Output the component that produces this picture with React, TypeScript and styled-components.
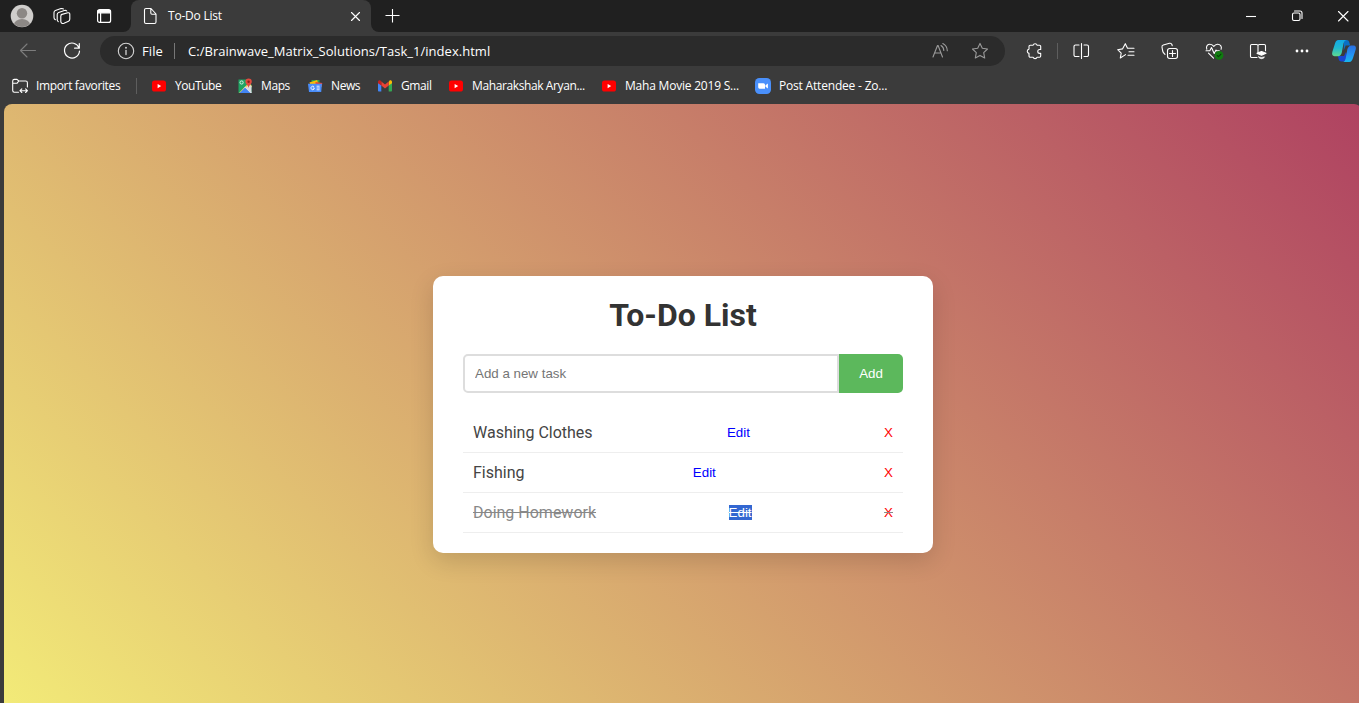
import React from "react";
import styled, { createGlobalStyle } from "styled-components";

const GlobalStyle = createGlobalStyle`
  *, *::before, *::after { box-sizing: border-box; }
  html, body { margin: 0; padding: 0; overflow: hidden; background: #3b3b3b; }
`;

const Browser = styled.div`
  width: 1359px;
  height: 703px;
  overflow: hidden;
  display: flex;
  flex-direction: column;
  background: #3b3b3b;
  color: #fff;
  font-family: "Open Sans", "Noto Sans", sans-serif;
`;

/* ---------- title bar ---------- */
const TitleBar = styled.div`
  flex: none;
  height: 32px;
  display: flex;
  align-items: stretch;
  background: #202020;
`;

const Cell = styled.div<{ $w: number }>`
  flex: none;
  width: ${(p) => p.$w}px;
  display: flex;
  align-items: center;
  justify-content: center;
`;

const TabLead = styled.div`
  flex: none;
  width: 131px;
  display: flex;
  background: #202020;
  border-bottom-right-radius: 8px;
`;

const TabBase = styled.div`
  flex: none;
  display: flex;
  background: #3b3b3b;
`;

const Tab = styled.div`
  width: 240px;
  display: flex;
  align-items: center;
  padding: 0 6px 0 9px;
  background: #3b3b3b;
`;

const TabSurface = styled.div`
  flex: none;
  display: flex;
  background: #202020;
  ${Tab} { border-radius: 8px 8px 0 0; }
`;

const TabTitle = styled.span`
  flex: 1;
  padding-left: 8px;
  font-size: 12px;
  line-height: 16px;
  letter-spacing: -0.22px;
  white-space: nowrap;
`;

const TabTail = styled.div`
  flex: 1;
  display: flex;
  justify-content: space-between;
  background: #202020;
  border-bottom-left-radius: 8px;
`;

const TailBase = styled.div`
  flex: 1;
  display: flex;
  background: #3b3b3b;
`;

const Group = styled.div`
  display: flex;
`;

/* ---------- toolbar ---------- */
const Toolbar = styled.div`
  flex: none;
  height: 38px;
  display: flex;
  align-items: center;
  padding-left: 6px;
`;

const AddressBar = styled.div`
  flex: none;
  width: 905px;
  height: 30px;
  margin: 0 7px 0 6px;
  padding: 0 5px 0 16px;
  border-radius: 15px;
  background: #2b2b2b;
  display: flex;
  align-items: center;
  font-size: 13px;
  line-height: 18px;
  white-space: nowrap;
`;

const Scheme = styled.span`
  width: 32px;
  padding-left: 6px;
  letter-spacing: 0.1px;
`;

const Url = styled.span`
  flex: 1;
  padding-left: 7px;
  letter-spacing: 0.03px;
`;

const Divider = styled.i<{ $h: number; $c: string }>`
  flex: none;
  width: 1px;
  height: ${(p) => p.$h}px;
  background: ${(p) => p.$c};
`;

/* ---------- favorites bar ---------- */
const FavoritesBar = styled.div`
  flex: none;
  height: 34px;
  display: flex;
  align-items: center;
  padding: 0 0 2px 12px;
`;

const Favorite = styled.div<{ $w: number; $ls: number }>`
  flex: none;
  width: ${(p) => p.$w}px;
  display: flex;
  align-items: center;
  gap: 8px;
  font-size: 12px;
  line-height: 16px;
  letter-spacing: ${(p) => p.$ls}px;
  white-space: nowrap;
  svg { flex: none; }
`;

const FavDivider = styled(Divider)`
  margin-right: 14px;
`;

/* ---------- page ---------- */
const Page = styled.main`
  flex: none;
  width: 1358px;
  height: 621px;
  margin-left: 4px;
  border-radius: 8px 8px 0 0;
  background: linear-gradient(45deg, #f3ec78, #af4261);
  display: flex;
  align-items: center;
  justify-content: center;
  font-family: Roboto, sans-serif;
`;

const Card = styled.section`
  width: 500px;
  height: 277px;
  padding: 20px 30px;
  border-radius: 10px;
  background: #fff;
  box-shadow: 0 8px 24px rgba(0, 0, 0, 0.14);
`;

const Heading = styled.h1`
  margin: 0 0 20px;
  font-size: 32px;
  line-height: 38px;
  font-weight: 700;
  text-align: center;
  color: #333;
`;

const Form = styled.div`
  display: flex;
  height: 39px;
  margin-bottom: 20px;
`;

const TaskInput = styled.input`
  flex: 1;
  min-width: 0;
  padding: 10px;
  border: 2px solid #ddd;
  border-radius: 5px 0 0 5px;
  background: #fff;
  outline: none;
  font: 13.333px "Liberation Sans", Arial, sans-serif;
  &::placeholder { color: #757575; opacity: 1; }
`;

const AddButton = styled.button`
  width: 64px;
  padding: 0;
  border: none;
  border-radius: 0 5px 5px 0;
  background: #5cb85c;
  color: #fff;
  font: 13.333px "Liberation Sans", Arial, sans-serif;
`;

const TaskList = styled.ul`
  margin: 0;
  padding: 0;
  list-style: none;
`;

const Task = styled.li<{ $done?: boolean }>`
  height: 40px;
  padding: 10px;
  border-bottom: 1px solid #eee;
  display: flex;
  justify-content: space-between;
  align-items: center;
  font-size: 16px;
  line-height: 19px;
  color: ${(p) => (p.$done ? "#888" : "#444")};
  text-decoration: ${(p) => (p.$done ? "line-through" : "none")};
`;

const Action = styled.span<{ $color: string; $selected?: boolean }>`
  font: 13.333px/15px "Liberation Sans", Arial, sans-serif;
  color: ${(p) => (p.$selected ? "#fff" : p.$color)};
  background: ${(p) => (p.$selected ? "#3367d1" : "transparent")};
`;

const SelectedText = styled.span`
  text-decoration: line-through #fff;
`;

/* ---------- icons ---------- */
type IconProps = { size?: number; c?: string; children: React.ReactNode; w?: number };
const Icon = ({ size = 20, c = "#fff", w = 1.1, children }: IconProps) => (
  <svg width={size} height={size} viewBox={`0 0 ${size} ${size}`} fill="none" stroke={c} strokeWidth={w} strokeLinecap="round" strokeLinejoin="round">
    {children}
  </svg>
);

const Avatar = () => (
  <svg width="24" height="24" viewBox="0 0 24 24">
    <defs><clipPath id="av"><circle cx="12" cy="12" r="11" /></clipPath></defs>
    <circle cx="12" cy="12" r="11.3" fill="#d0cecc" />
    <g clipPath="url(#av)" fill="#8c8885">
      <circle cx="12" cy="9.3" r="5.2" />
      <ellipse cx="12" cy="20.4" rx="8" ry="5.3" />
    </g>
  </svg>
);

const Workspaces = () => (
  <Icon>
    <path d="M9.2 8.6 15.8 6.8Q17.8 6.4 17.8 8.2V13Q17.8 14.6 16.5 15.3L12 17.3Q9.2 18 8.8 15.6V10Q8.8 8.8 10 8.4Z" />
    <path d="M6.3 15.6Q5.2 14.8 5.2 13.4V8.6Q5.2 7 6.7 6.5L12.3 4.5Q14 4.1 14.8 5" />
    <path d="M3.4 13.7Q2 13 2 11.4V6.4Q2 5 3.4 4.5L9 2.6Q10.6 2.2 11.4 3" />
  </Icon>
);

const TabActions = () => (
  <Icon w={1.2}>
    <rect x="3.6" y="3.6" width="13" height="12.8" rx="2" />
    <path d="M4 4.6h12.2v2.2H4z" fill="#fff" />
    <path d="M6.6 7v9" />
  </Icon>
);

const Doc = () => (
  <Icon>
    <path d="M6 2.5h5L16 8v8a1.5 1.5 0 0 1-1.5 1.5H6A1.5 1.5 0 0 1 4.5 16V4A1.5 1.5 0 0 1 6 2.5ZM10.8 2.8V7a1.2 1.2 0 0 0 1.2 1.2h3.8" />
  </Icon>
);

const Star = "M10 2.4l2.3 4.9 5.2.7-3.8 3.7 1 5.3L10 14.4 5.3 17l1-5.3L2.5 8l5.2-.7Z";

const YouTube = () => (
  <svg width="16" height="16" viewBox="0 0 16 16">
    <rect x="1" y="2.5" width="14" height="11" rx="2.6" fill="#f00" />
    <path d="M6.6 5.9v4.4l3.6-2.2z" fill="#fff" />
  </svg>
);

const Maps = () => (
  <svg width="16" height="16" viewBox="0 0 16 16">
    <path d="M1.5 1.5h9L14.5 7v8h-13z" fill="#1fa463" />
    <path d="M2 14.8 12 4.8l2.6 3V9L8.4 15z" fill="#ffd04b" />
    <path d="M8.2 8.6 14.5 14v1h-11z" fill="#e8eaed" />
    <path d="M8 9.5 13.5 15h-11z" fill="#4285f4" />
    <path d="M14.5 8v7L9.2 9.2 12 6.6z" fill="#dadce0" />
    <circle cx="4.6" cy="4.5" r="1.6" fill="none" stroke="#e8f5ee" strokeWidth=".9" />
    <path d="M11.6.6a3.2 3.2 0 0 1 3.2 3.2c0 2.3-2.7 3.3-3.2 6.2-.5-2.9-3.2-3.9-3.2-6.2A3.2 3.2 0 0 1 11.6.6Z" fill="#e04a3f" />
    <circle cx="11.6" cy="3.8" r="1.2" fill="#8c1f1a" />
  </svg>
);

const News = () => (
  <svg width="16" height="16" viewBox="0 0 16 16">
    <path d="M4.5 2h8v4h-8z" fill="#2e9e4e" />
    <path d="M2.4 4.4 10.2 2l1 4H3z" fill="#fbbc04" />
    <path d="m8.5 4 6.8 1-.6 4-6.2-.5z" fill="#ea4335" />
    <path d="M1 5.8h14L14.2 14H2z" fill="#4a8df8" />
    <path d="M7.2 8.9A1.8 1.8 0 1 0 7.2 11V10H5.8M9.6 8.2h3M9.6 10h3.2M9.6 11.8h3" fill="none" stroke="#e4eeff" strokeWidth="1" />
  </svg>
);

const Gmail = () => (
  <svg width="16" height="16" viewBox="0 0 16 16">
    <path d="M1 4.6v7.8c0 .6.4 1 1 1h2.3V7z" fill="#4285f4" />
    <path d="M15 4.6v7.8c0 .6-.4 1-1 1h-2.3V7z" fill="#34a853" />
    <path d="M11.7 4.1V7.6L15 5.2V4c0-1.5-1.6-2.1-2.6-1.3z" fill="#fbbc04" />
    <path d="M4.3 7.6V3.6L8 6.4l3.7-2.8v4L8 10.4z" fill="#ea4335" />
    <path d="M1 4v1.2l3.3 2.4V3.6l-.7-.9C2.6 1.9 1 2.5 1 4z" fill="#c5221f" />
  </svg>
);

const Zoom = () => (
  <svg width="16" height="16" viewBox="0 0 16 16">
    <rect width="16" height="16" rx="4.4" fill="#4a90fb" />
    <path d="M3.2 5.2h5.3a1.5 1.5 0 0 1 1.5 1.5v4H4.6a1.5 1.5 0 0 1-1.4-1.5zM10.5 7.2l2.4-1.7v5l-2.400-1.700z" fill="#fff" />
  </svg>
);

const ImportFolder = () => (
  <Icon size={16}>
    <path d="M6.5 14.2H2.3A1.7 1.7 0 0 1 .7 12.5V3A1.7 1.7 0 0 1 2.3 1.4H5L6.8 3H13.7A1.7 1.7 0 0 1 15.4 4.7V9M.8 5.3H5L6.8 3" />
    <path d="M8 12.7h7.400M9.8 10.9 8 12.7l1.8 1.8M13.6 10.9l1.8 1.8-1.8 1.8" />
  </Icon>
);

const Copilot = () => (
  <svg width="26" height="26" viewBox="0 0 26 26">
    <defs>
      <linearGradient id="cpA" x1="0" y1="0" x2="0" y2="1"><stop stopColor="#12a9e6" /><stop offset=".5" stopColor="#21b9cf" /><stop offset="1" stopColor="#5fd98f" /></linearGradient>
      <linearGradient id="cpB" x1="0" y1="0" x2="0" y2="1"><stop stopColor="#2a6fe0" /><stop offset=".55" stopColor="#2493f5" /><stop offset="1" stopColor="#18b7ee" /></linearGradient>
    </defs>
    <path d="M13 2h2.500c2 0 2.500 1.300 3 3l.7 2.500h-4.500l-2 5z" fill="#0b6fc4" />
    <path d="M7 18h6l2-4 1.500 6-1.300 3.500H10.500c-2 0-2.500-1.200-3-3z" fill="#1846d2" />
    <path d="M7.500 2h8c-2 .4-2.500 2-3 3.500L10.700 15c-.7 2-1.500 3.200-3.700 3.200H3.500C1.300 18.200.7 16.300 1.300 14L4 5.500C4.700 3.200 5.500 2 7.500 2Z" fill="url(#cpA)" />
    <path d="M18 7.500h4.500c2.300 0 2.800 2 2.200 4L22 20c-.7 2.300-1.600 4-3.800 4h-6c1.500-.5 2-2 2.500-3.500l1.600-9c.6-2 1.700-3.500 3.700-4Z" fill="url(#cpB)" />
  </svg>
);

const favorites = [
  { label: "YouTube", icon: <YouTube />, w: 86, ls: -0.45 },
  { label: "Maps", icon: <Maps />, w: 70, ls: -0.4 },
  { label: "News", icon: <News />, w: 70, ls: -0.4 },
  { label: "Gmail", icon: <Gmail />, w: 71, ls: -0.4 },
  { label: "Maharakshak Aryan...", icon: <YouTube />, w: 153, ls: -0.39 },
  { label: "Maha Movie 2019 S...", icon: <YouTube />, w: 154, ls: -0.21 },
  { label: "Post Attendee - Zo...", icon: <Zoom />, w: 140, ls: -0.19 },
];

const tasks = [
  { text: "Washing Clothes" },
  { text: "Fishing" },
  { text: "Doing Homework", done: true, selected: true },
];

export default function App() {
  return (
    <Browser>
      <GlobalStyle />
      <TitleBar>
        <TabBase>
          <TabLead>
            <Cell $w={44}><Avatar /></Cell>
            <Cell $w={36}><Workspaces /></Cell>
            <Cell $w={48}><TabActions /></Cell>
          </TabLead>
        </TabBase>
        <TabSurface>
          <Tab>
            <Doc />
            <TabTitle>To-Do List</TabTitle>
            <Icon><path d="M6.500 6.500l8 8M14.500 6.500l-8 8" /></Icon>
          </Tab>
        </TabSurface>
        <TailBase>
          <TabTail>
            <Cell $w={42}><Icon><path d="M10.500 3v13.500M3.500 9.500h14" strokeLinecap="butt" /></Icon></Cell>
            <Group>
              <Cell $w={46}><Icon><path d="M5 10.500h10" strokeLinecap="butt" /></Icon></Cell>
              <Cell $w={46}>
                <Icon><rect x="5.500" y="7" width="7.500" height="7.500" rx="1.500" /><path d="M7.500 5h5.500a2 2 0 0 1 2 2v5.500" /></Icon>
              </Cell>
              <Cell $w={39}><Icon><path d="M8.500 5.500l9.500 9.500M18 5.500l-9.500 9.500" /></Icon></Cell>
            </Group>
          </TabTail>
        </TailBase>
      </TitleBar>

      <Toolbar>
        <Cell $w={44}><Icon c="#7d7d7d"><path d="M17.500 9.500H2.500M9 3 2.500 9.500 9 16" /></Icon></Cell>
        <Cell $w={44}><Icon w={1.2}><path d="M17 6.800A7.500 7.500 0 1 0 17.500 10M17.300 2.500v4.700h-4.700" /></Icon></Cell>
        <AddressBar>
          <Icon c="#d5d5d5"><circle cx="10" cy="10" r="7.700" /><path d="M10 9.500v4" strokeWidth="1.300" /><circle cx="10" cy="6.800" r=".4" /></Icon>
          <Scheme>File</Scheme>
          <Cell $w={13}><Divider $h={16} $c="#777" /></Cell>
          <Url>C:/Brainwave_Matrix_Solutions/Task_1/index.html</Url>
          <Cell $w={40}>
            <Icon c="#9a9a9a"><path d="M3 16 7.500 4.500h.6L12.500 16M4.700 12h6.200M11 4.500q2.800 1.700 2.800 5M12.800 2.500q4.500 2.500 4.500 7.300" /></Icon>
          </Cell>
          <Cell $w={40}><Icon c="#9a9a9a"><path d={Star} /></Icon></Cell>
        </AddressBar>
        <Cell $w={45}>
          <Icon>
            <path d="M5.200 4.300H8a2.200 2.200 0 0 1 4.200 0h2.300a1.200 1.200 0 0 1 1.200 1.200v3h-1a1.900 1.900 0 0 0 0 3.900h1v2.600a1.200 1.200 0 0 1-1.200 1.200h-2.400a2.100 2.100 0 0 1-4 0H5.200A1.200 1.200 0 0 1 4 15v-2.600a2.200 2.200 0 0 1 0-4.300V5.500a1.200 1.200 0 0 1 1.200-1.200Z" />
          </Icon>
        </Cell>
        <Divider $h={16} $c="#5e5e5e" />
        <Cell $w={46}>
          <Icon><path d="M8 4H4.500A1.500 1.500 0 0 0 3 5.500v8.500A1.500 1.500 0 0 0 4.500 15.500H8M13 4h3A1.500 1.500 0 0 1 17.500 5.500v8.500a1.500 1.500 0 0 1-1.500 1.500H13M10.500 2.500v15" /></Icon>
        </Cell>
        <Cell $w={44}>
          <Icon><path d="M11.500 7.300H18M13 10.800h5M12 14.300h6M8 14.600 4.300 17l.9-4.800L1.700 8.700l4.800-.8L9.300 2.700l2.200 4.600M8 14.600l1.500-1" /></Icon>
        </Cell>
        <Cell $w={44}>
          <Icon>
            <path d="M5 13.300 3.700 12Q3 11.200 2.700 10L2 6.200Q1.700 4.500 3.300 4L9.500 2.300Q11.300 1.900 11.900 3.500L12.200 4.700" />
            <rect x="7.500" y="7.500" width="10" height="10" rx="2.200" /><path d="M12.500 9.500v6M9.500 12.500h6" />
          </Icon>
        </Cell>
        <Cell $w={44}>
          <Icon>
            <path d="M2.800 8.200C1.600 5 4 3 6.200 3.200c1.600.1 2.700 1 3.600 2.200 1-1.300 2.100-2.100 3.700-2.200 2.600-.1 4.700 2.200 3.600 5M2 9.700h3.800L7.500 6.500l2.700 6L12 9l.8.900h2.500M4.500 12.200l5 5" />
            <circle cx="15" cy="14.300" r="4.400" fill="#107c10" stroke="none" />
            <path d="m13.200 14.500 1.300 1.200 2.500-2.500" stroke="#073f07" />
          </Icon>
        </Cell>
        <Cell $w={44}>
          <Icon>
            <path d="M9 16.500H3.800A1.200 1.200 0 0 1 2.500 15.200V4.700a1.200 1.200 0 0 1 1.200-1.200h4.800q1.500 0 1.500 1.200v8M10 4.700q0-1.200 1.500-1.200h4.800a1.200 1.200 0 0 1 1.200 1.200v5" />
            <path d="m9 12.300 4.500-1.800 4.500 1.800-4.500 2z" fill="#fff" />
            <path d="M10.500 15.800q3 1.300 6 0-.5 1.900-3 1.900t-3-1.900Z" fill="#fff" strokeWidth=".6" />
          </Icon>
        </Cell>
        <Cell $w={44}><Icon><g fill="#fff" stroke="none"><circle cx="5" cy="10" r="1.400" /><circle cx="10" cy="10" r="1.400" /><circle cx="15" cy="10" r="1.400" /></g></Icon></Cell>
        <Cell $w={40}><Copilot /></Cell>
      </Toolbar>

      <FavoritesBar>
        <Favorite $w={124} $ls={-0.35}><ImportFolder />Import favorites</Favorite>
        <FavDivider $h={16} $c="#5e5e5e" />
        {favorites.map((f) => (
          <Favorite key={f.label} $w={f.w} $ls={f.ls}>{f.icon}<span>{f.label}</span></Favorite>
        ))}
      </FavoritesBar>

      <Page>
        <Card>
          <Heading>To-Do List</Heading>
          <Form>
            <TaskInput placeholder="Add a new task" />
            <AddButton>Add</AddButton>
          </Form>
          <TaskList>
            {tasks.map((t) => (
              <Task key={t.text} $done={t.done}>
                <span>{t.text}</span>
                <Action $color="#00f" $selected={t.selected}>{t.selected ? <SelectedText>Edit</SelectedText> : "Edit"}</Action>
                <Action $color="#f00">X</Action>
              </Task>
            ))}
          </TaskList>
        </Card>
      </Page>
    </Browser>
  );
}
